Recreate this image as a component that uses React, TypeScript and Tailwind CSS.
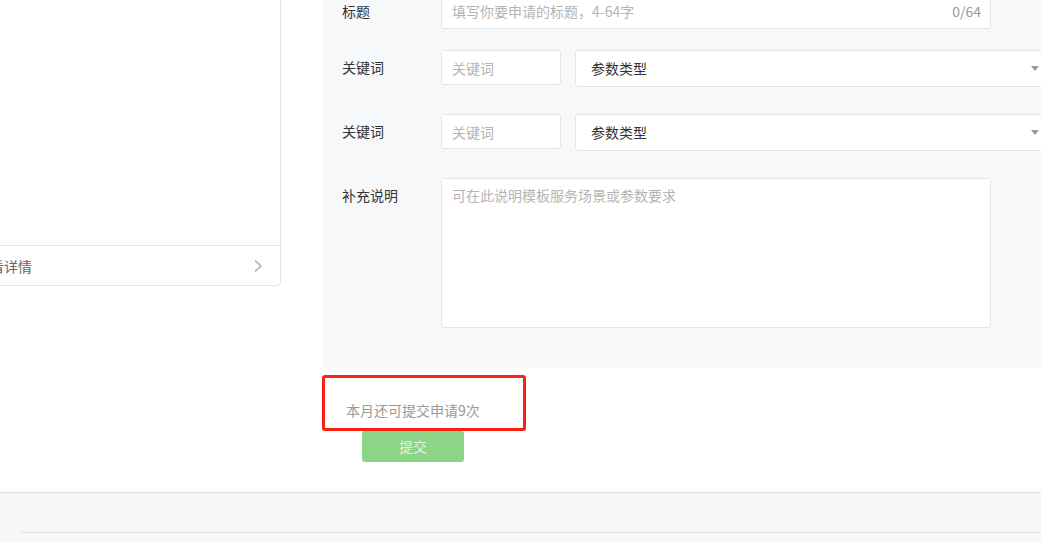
export default function App() {
  return (
    <div className="w-[1041px] h-[542px] overflow-hidden bg-[#f6f7f9] text-[14px] text-[#333] font-['Noto_Sans_CJK_SC','Liberation_Sans',sans-serif]">
      <div className="flex h-[493px] bg-white border-b border-[#dcdcdc] overflow-hidden">
        {/* left card */}
        <div className="ml-[-44px] mt-[-100px] w-[325px] h-[386px] shrink-0 border border-[#e5e5e5] rounded-[4px] bg-white flex flex-col">
          <div className="flex-1" />
          <div className="h-[40px] border-t border-[#e8e8e8] flex items-center justify-between pl-[19px] pr-[17px]">
            <span className="text-[#666] leading-[20px]">查看详情</span>
            <svg width="10" height="14" viewBox="0 0 10 14" fill="none">
              <path d="M2 1.5 L8 7 L2 12.5" stroke="#bdbdbd" strokeWidth="1.8" />
            </svg>
          </div>
        </div>

        {/* right column */}
        <div className="ml-[42px] flex flex-col w-[760px] shrink-0">
          <div className="mt-[-30px] pt-[24px] pb-[40px] pl-[19px] rounded-bl-[4px] bg-[#f7f8fa]">
            {/* title */}
            <div className="flex">
              <div className="w-[99px] leading-[35px]">标题</div>
              <div className="w-[550px] h-[35px] bg-white border border-[#e3e5e9] rounded-[3px] flex items-center justify-between pl-[10px] pr-[9px]">
                <input
                  className="flex-1 outline-none bg-transparent text-[14px] placeholder:text-[#b4b4b4]"
                  placeholder="填写你要申请的标题，4-64字"
                />
                <span className="text-[#999]">0/64</span>
              </div>
            </div>
            {/* keyword 1 */}
            <div className="flex mt-[21px]">
              <div className="w-[99px] leading-[35px]">关键词</div>
              <input
                className="w-[120px] h-[35px] bg-white border border-[#e3e5e9] rounded-[3px] px-[10px] outline-none text-[14px] placeholder:text-[#b4b4b4]"
                placeholder="关键词"
              />
              <div className="ml-[14px] w-[480px] h-[37px] bg-white border border-[#e3e5e9] rounded-[3px] flex items-center justify-between pl-[15px] pr-[15px]">
                <span>参数类型</span>
                <span className="w-0 h-0 border-l-[4px] border-r-[4px] border-t-[5px] border-l-transparent border-r-transparent border-t-[#999]" />
              </div>
            </div>
            {/* keyword 2 */}
            <div className="flex mt-[27px]">
              <div className="w-[99px] leading-[35px]">关键词</div>
              <input
                className="w-[120px] h-[35px] bg-white border border-[#e3e5e9] rounded-[3px] px-[10px] outline-none text-[14px] placeholder:text-[#b4b4b4]"
                placeholder="关键词"
              />
              <div className="ml-[14px] w-[480px] h-[37px] bg-white border border-[#e3e5e9] rounded-[3px] flex items-center justify-between pl-[15px] pr-[15px]">
                <span>参数类型</span>
                <span className="w-0 h-0 border-l-[4px] border-r-[4px] border-t-[5px] border-l-transparent border-r-transparent border-t-[#999]" />
              </div>
            </div>
            {/* description */}
            <div className="flex mt-[27px]">
              <div className="w-[99px] leading-[35px]">补充说明</div>
              <textarea
                className="w-[550px] h-[150px] bg-white border border-[#e3e5e9] rounded-[3px] px-[10px] pt-[6px] leading-[20px] outline-none resize-none text-[14px] placeholder:text-[#b4b4b4]"
                placeholder="可在此说明模板服务场景或参数要求"
              />
            </div>
          </div>

          <div className="mt-[7px] ml-[-1px] w-[204px] h-[56px] border-[3px] border-[#fc2012] rounded-[3px] pl-[21px] pt-[22px]">
            <div className="leading-[20px] text-[#999]">本月还可提交申请9次</div>
          </div>

          <button className="ml-[39px] w-[102px] h-[31px] bg-[#8cd486] rounded-[3px] text-[#e3f3df] text-[14px] flex items-center justify-center">
            提交
          </button>
        </div>
      </div>

      <div className="mt-[39px] ml-[20px] h-px bg-[#e2e3e6]" />
    </div>
  );
}
